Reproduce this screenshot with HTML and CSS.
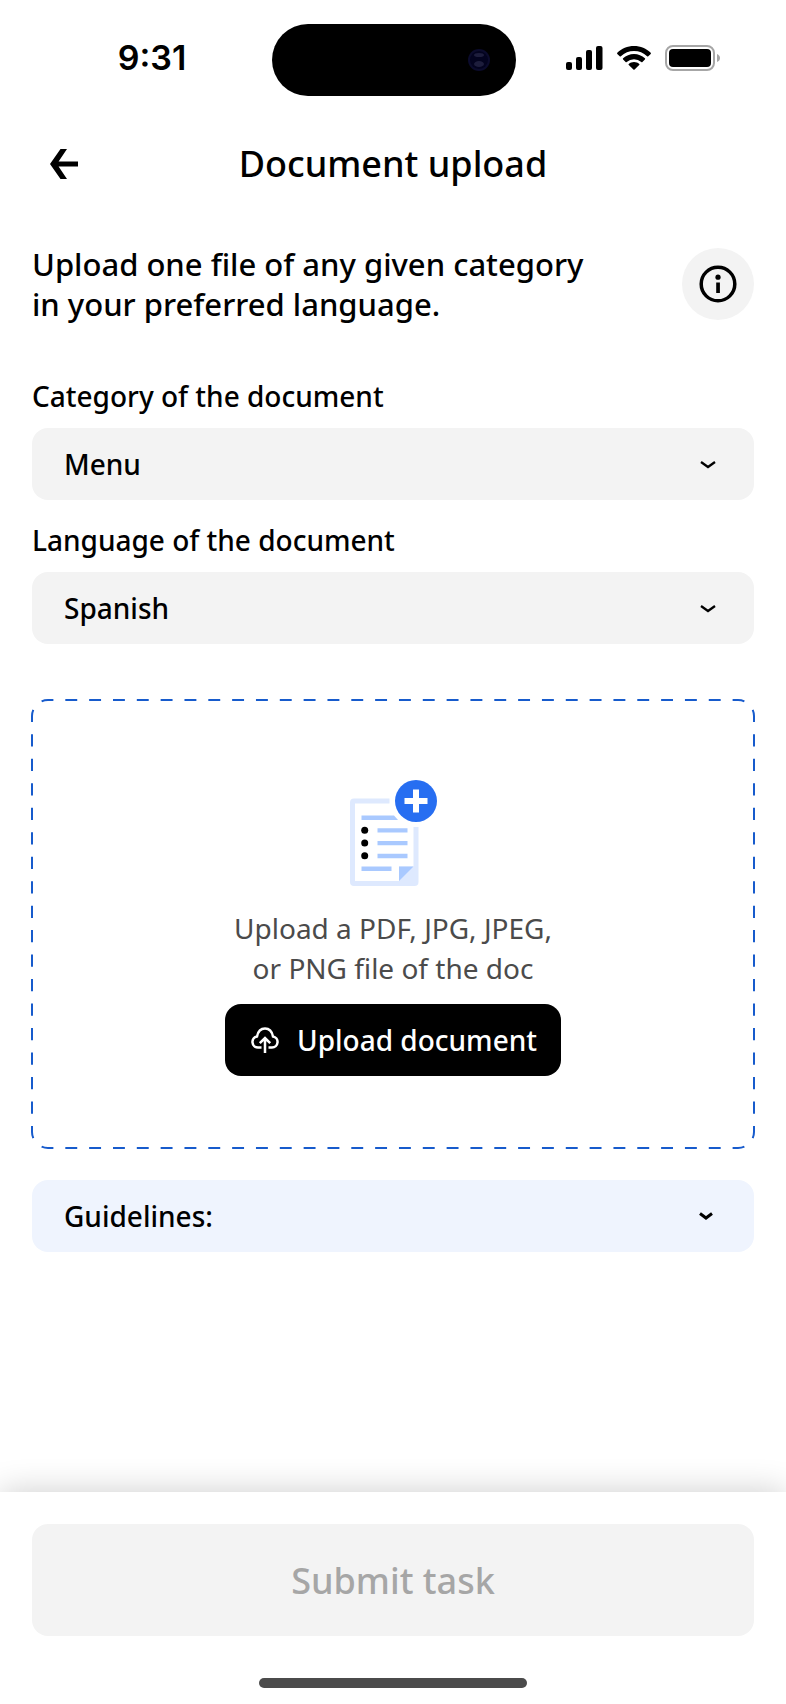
FILE: index.html
```html
<!DOCTYPE html>
<html lang="en">
<head>
  <meta charset="UTF-8">
  <meta name="viewport" content="width=device-width, initial-scale=1.0">
  <title>Document upload</title>
  <link rel="stylesheet" href="styles.css">
</head>
<body>

  <div class="screen">
    <!-- Phone status bar -->
    <div class="status-bar">
      <div class="time">9:31</div>
      <div class="island">
        <svg class="camera" width="22" height="22" viewBox="0 0 22 22">
          <circle cx="11" cy="11" r="11" fill="#0b0b2c"/>
          <circle cx="11" cy="11" r="9" fill="#03031f"/>
          <ellipse cx="11" cy="6" rx="5" ry="2" fill="#1d1d3c"/>
          <ellipse cx="11" cy="15" rx="5" ry="3" fill="#1d1d3c"/>
        </svg>
      </div>
      <div class="status-icons">
        <svg width="37" height="24" viewBox="0 0 37 24">
          <rect x="0" y="16" width="6" height="8" rx="2"/>
          <rect x="10" y="11" width="6" height="13" rx="2"/>
          <rect x="20" y="4" width="6" height="20" rx="2"/>
          <rect x="30" y="0" width="6.5" height="24" rx="2"/>
        </svg>
        <svg width="34" height="24" viewBox="0 0 34 24">
          <path d="M17 0C23.500 0 29.500 2.500 33.700 6.700Q34.200 7.300 33.700 7.900L31.300 10.300Q30.700 10.800 30.100 10.300A19 19 0 0 0 3.900 10.300Q3.300 10.800 2.700 10.300L.3 7.900Q-.2 7.300.3 6.700C4.500 2.500 10.500 0 17 0Z"/>
          <path d="M17 8C21.200 8 25 9.600 27.900 12.300Q28.500 12.900 27.900 13.500L25.400 15.900Q24.900 16.400 24.300 15.900A11 11 0 0 0 9.700 15.900Q9.100 16.400 8.600 15.900L6.100 13.500Q5.500 12.900 6.100 12.300C9 9.600 12.800 8 17 8Z"/>
          <path d="M17 16C19 16 20.800 16.700 22.200 17.900Q22.800 18.500 22.200 19.100L17.600 23.600Q17 24.100 16.400 23.600L11.800 19.100Q11.200 18.500 11.800 17.900C13.200 16.700 15 16 17 16Z"/>
        </svg>
        <svg width="55" height="26" viewBox="0 0 55 26">
          <rect x="1" y="1" width="48" height="24" rx="7" fill="none" stroke="#a6a6a6" stroke-width="2"/>
          <rect x="4" y="4" width="42" height="18" rx="4"/>
          <path d="M52 9C54 10 55 11 55 13S54 16 52 17Z" fill="#a6a6a6"/>
        </svg>
      </div>
    </div>

    <header class="header">
      <button class="back-btn" type="button" aria-label="Back">
        <svg width="28" height="30" viewBox="0 0 28 30">
          <path d="M10.500 0H17L8.600 12.500H28V17.500H8.600L17 30H10.500L0 15Z"/>
        </svg>
      </button>
      <h1 class="title">Document upload</h1>
    </header>

    <main class="content">
      <div class="intro">
        <p class="intro-text">Upload one file of any given category in your preferred language.</p>
        <button class="info-btn" type="button" aria-label="More information">
          <svg width="38" height="38" viewBox="0 0 38 38">
            <circle cx="19" cy="19" r="16.800" fill="none" stroke="#000" stroke-width="3.500"/>
            <circle cx="19" cy="12.200" r="2.600"/>
            <rect x="17.200" y="17.500" width="3.700" height="10.500"/>
          </svg>
        </button>
      </div>

      <div class="field">
        <label for="category">Category of the document</label>
        <div class="select-wrap">
          <select id="category">
            <option>Menu</option>
          </select>
          <svg class="chevron" width="16" height="10" viewBox="0 0 16 10">
            <path d="M1 2L8 7L15 2" fill="none" stroke="#000" stroke-width="2.300"/>
          </svg>
        </div>
      </div>

      <div class="field">
        <label for="language">Language of the document</label>
        <div class="select-wrap">
          <select id="language">
            <option>Spanish</option>
          </select>
          <svg class="chevron" width="16" height="10" viewBox="0 0 16 10">
            <path d="M1 2L8 7L15 2" fill="none" stroke="#000" stroke-width="2.300"/>
          </svg>
        </div>
      </div>

      <section class="dropzone">
        <!-- Dashed outline, one path per side -->
        <svg class="outline" viewBox="0 0 724 450" preserveAspectRatio="none">
          <path pathLength="720" d="M5.700 5.700A16 16 0 0 1 17 1H707A16 16 0 0 1 718.300 5.700"/>
          <path pathLength="720" d="M5.700 444.300A16 16 0 0 0 17 449H707A16 16 0 0 0 718.300 444.300"/>
          <path pathLength="432" d="M5.700 5.700A16 16 0 0 0 1 17V433A16 16 0 0 0 5.700 444.300"/>
          <path pathLength="432" d="M718.300 5.700A16 16 0 0 1 723 17V433A16 16 0 0 1 718.300 444.300"/>
        </svg>
        <svg class="doc-icon" width="87" height="108" viewBox="0 0 87 108">
          <path d="M39.500 21H4Q2.500 21 2.500 22.500V102Q2.500 103.500 4 103.500H64.500Q66 103.500 66 102V47" fill="none" stroke="#dee9fe" stroke-width="5"/>
          <path d="M49 86.500H66V103H49Z" fill="#dee9fe"/>
          <path d="M49 86.500H63.500L49 101Z" fill="#a9c9ff"/>
          <path d="M11.500 35.500H44L48 40H11.500ZM27.500 48.300H57.500V52.600H27.500ZM27.500 61H57.500V65.300H27.500ZM27.500 73.800H57.500V78.200H27.500ZM11.500 86.600H41.500V91H11.500Z" fill="#a9c9ff"/>
          <circle cx="14.700" cy="50.300" r="3.500"/>
          <circle cx="14.700" cy="63" r="3.500"/>
          <circle cx="14.700" cy="75.800" r="3.500"/>
          <circle cx="66" cy="21" r="21" fill="#276ef1"/>
          <path d="M63 9.500H69V18H77.500V24H69V32.500H63V24H54.500V18H63Z" fill="#fff"/>
        </svg>
        <p class="hint">Upload a PDF, JPG, JPEG,<br>or PNG file of the doc</p>
        <button class="upload-btn" type="button">
          <svg width="28" height="26" viewBox="0 0 28 26" fill="none" stroke="#fff" stroke-width="2.500">
            <path d="M10.500 20.500H7A5.600 5.600 0 0 1 6 9.400C7 4.500 10 1.500 14 1.500S21 4.500 22 9.400A5.600 5.600 0 0 1 21 20.500H17.500"/>
            <path d="M14 26V11.500M8.800 16.200L14 11L19.200 16.200"/>
          </svg>
          Upload document
        </button>
      </section>

      <button class="guidelines" type="button" aria-expanded="false">
        Guidelines:
        <svg width="14" height="10" viewBox="0 0 14 10">
          <path d="M1 2.500L7 7L13 2.500" fill="none" stroke="#000" stroke-width="3"/>
        </svg>
      </button>
    </main>

    <footer class="footer">
      <button class="submit-btn" type="submit" disabled>Submit task</button>
      <div class="home-indicator"></div>
    </footer>
  </div>

</body>
</html>
```
FILE: styles.css
```css
* {
  box-sizing: border-box;
}

body {
  margin: 0;
  font-family: "Noto Sans", sans-serif;
  font-weight: 500;
  color: #000;
  background: #fff;
}

button, select {
  font: inherit;
  color: inherit;
  border: none;
  cursor: pointer;
}

svg {
  display: block;
  flex-shrink: 0;
}

.screen {
  min-height: 100vh;
  display: flex;
  flex-direction: column;
}

/* Status bar */
.status-bar {
  display: grid;
  grid-template-columns: 1fr 244px 1fr;
  align-items: center;
  padding: 24px 0 0 2px;
}

.time {
  font-family: Inter, sans-serif;
  font-size: 34px;
  font-weight: 600;
  line-height: 40px;
  padding: 0 0 4px 30px;
  text-align: center;
}

.island {
  height: 72px;
  border-radius: 36px;
  background: #000;
  display: flex;
  align-items: center;
  justify-content: flex-end;
  padding-right: 26px;
}

.status-icons {
  display: flex;
  align-items: center;
  justify-content: flex-end;
  gap: 14px;
  padding: 0 66px 4px 0;
}

/* Header */
.header {
  display: grid;
  grid-template-columns: 64px 1fr 64px;
  align-items: center;
  padding: 0 32px;
  height: 136px;
}

.back-btn {
  padding: 16px 18px;
  background: none;
}

.title {
  margin: 0;
  font-size: 36px;
  font-weight: 500;
  line-height: 48px;
  text-align: center;
}

/* Main content */
.content {
  flex-grow: 1;
  padding: 12px 32px 32px;
}

.intro {
  display: flex;
  align-items: center;
  justify-content: space-between;
  margin-bottom: 52px;
}

.intro-text {
  margin: 0;
  max-width: 576px;
  font-size: 31px;
  line-height: 40px;
}

.info-btn {
  display: flex;
  align-items: center;
  justify-content: center;
  width: 72px;
  height: 72px;
  padding: 0;
  border-radius: 50%;
  background: #f3f3f3;
}

.field {
  margin-bottom: 20px;
}

.field label {
  display: block;
  margin-bottom: 12px;
  font-size: 28px;
  line-height: 40px;
}

.select-wrap {
  position: relative;
}

.select-wrap select {
  display: block;
  width: 100%;
  height: 72px;
  padding: 0 32px;
  border-radius: 16px;
  background: #f3f3f3;
  font-size: 28px;
  appearance: none;
}

.chevron {
  position: absolute;
  top: 32px;
  right: 38px;
  pointer-events: none;
}

/* Upload area */
.dropzone {
  position: relative;
  display: flex;
  flex-direction: column;
  align-items: center;
  margin: 56px 0 32px;
  padding: 80px 32px 72px;
}

.outline {
  position: absolute;
  top: -1px;
  left: -1px;
  width: calc(100% + 2px);
  height: calc(100% + 2px);
  fill: none;
  stroke: #175bcc;
  stroke-width: 2;
  stroke-dasharray: 12 12;
  stroke-dashoffset: -6;
}

.hint {
  margin: 20px 0 16px;
  font-size: 28px;
  font-weight: 400;
  line-height: 40px;
  text-align: center;
  color: #4b4b4b;
}

.upload-btn {
  display: flex;
  align-items: center;
  gap: 18px;
  height: 72px;
  padding: 0 24px 0 26px;
  border-radius: 16px;
  background: #000;
  color: #fff;
  font-size: 28px;
}

.guidelines {
  display: flex;
  align-items: center;
  justify-content: space-between;
  width: 100%;
  height: 72px;
  padding: 0 41px 0 32px;
  border-radius: 16px;
  background: #eff4fe;
  font-size: 28px;
}

/* Footer */
.footer {
  padding: 32px 32px 16px;
  background: #fff;
  box-shadow: 0 0 32px rgba(0, 0, 0, 0.2);
}

.submit-btn {
  display: block;
  width: 100%;
  height: 112px;
  border-radius: 16px;
  background: #f3f3f3;
  color: #a6a6a6;
  font-size: 36px;
  cursor: default;
}

.home-indicator {
  width: 37%;
  height: 10px;
  margin: 42px auto 0;
  border-radius: 5px;
  background: #4b4b4b;
}
```
